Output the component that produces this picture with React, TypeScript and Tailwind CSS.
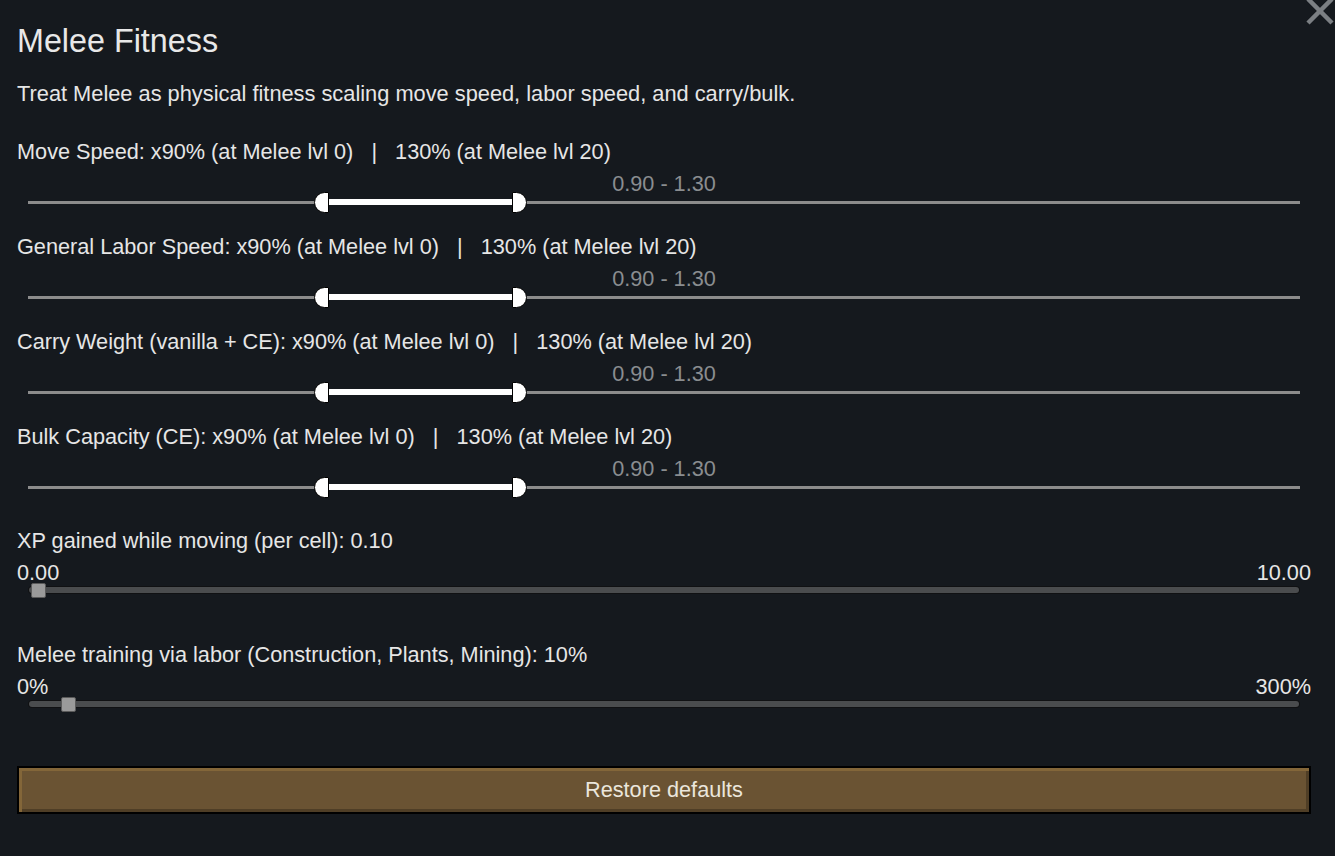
import React from "react";

const font = { fontFamily: '"Liberation Sans", Arial, sans-serif' };

function RangeRow({ label }: { label: string }) {
  return (
    <div className="flex h-[95px] flex-col">
      <div className="h-[22px] whitespace-pre text-[21.7px] leading-[22px] text-[#e6e6e6]">{label}</div>
      <div className="mt-[10px] h-[22px] text-center text-[21.7px] leading-[22px] text-[#8a8d90]">0.90 - 1.30</div>
      <div className="relative mx-[11px] h-[22px]">
        <div className="absolute left-0 right-0 top-[6px] h-[3px] bg-[#8c8c8c]" />
        <div className="absolute left-[300px] top-[4px] h-[6px] w-[186px] bg-white" />
        <div className="absolute left-[286px] top-[-3px] h-[21px] w-[15px] rounded-l-full border border-black bg-white" />
        <div className="absolute left-[484px] top-[-3px] h-[21px] w-[15px] rounded-r-full border border-black bg-white" />
      </div>
    </div>
  );
}

function SingleSlider({ label, min, max, pos }: { label: string; min: string; max: string; pos: number }) {
  return (
    <div className="flex flex-col">
      <div className="h-[22px] text-[21.7px] leading-[22px] text-[#e6e6e6]">{label}</div>
      <div className="mt-[10px] flex h-[22px] justify-between text-[21.7px] leading-[22px] text-[#e6e6e6]">
        <span>{min}</span>
        <span>{max}</span>
      </div>
      <div className="relative mx-[11px] h-[16px]">
        <div className="absolute left-0 right-0 top-[2px] h-[8px] rounded-full bg-[#101113] p-[1px]">
          <div className="h-full w-full rounded-full bg-[#4a4c4e]" />
        </div>
        <div
          className="absolute top-[-1px] h-[15px] w-[15px] rounded-[2px] border border-[#5a5a5a] bg-[#9a9a9a]"
          style={{ left: pos }}
        />
      </div>
    </div>
  );
}

export default function App() {
  return (
    <div className="relative h-[856px] w-[1335px] overflow-hidden bg-[#15191e]" style={font}>
      <svg className="absolute right-[0px] top-[-3px]" width="31" height="28" viewBox="0 0 31 28">
        <path d="M4 2 L28 26 M28 2 L4 26" stroke="#7b7f83" strokeWidth="4.5" />
      </svg>
      <div className="flex flex-col pl-[17px] pr-[24px] pt-[23px]">
        <div className="text-[32.3px] leading-[36px] text-[#e8e8e8]">Melee Fitness</div>
        <div className="mt-[24px] h-[22px] text-[21.8px] leading-[22px] text-[#e6e6e6]">
          Treat Melee as physical fitness scaling move speed, labor speed, and carry/bulk.
        </div>
        <div className="mt-[36px] flex flex-col">
          <RangeRow label="Move Speed: x90% (at Melee lvl 0)   |   130% (at Melee lvl 20)" />
          <RangeRow label="General Labor Speed: x90% (at Melee lvl 0)   |   130% (at Melee lvl 20)" />
          <RangeRow label="Carry Weight (vanilla + CE): x90% (at Melee lvl 0)   |   130% (at Melee lvl 20)" />
          <RangeRow label="Bulk Capacity (CE): x90% (at Melee lvl 0)   |   130% (at Melee lvl 20)" />
        </div>
        <div className="mt-[9px]">
          <SingleSlider label="XP gained while moving (per cell): 0.10" min="0.00" max="10.00" pos={3} />
        </div>
        <div className="mt-[44px]">
          <SingleSlider
            label="Melee training via labor (Construction, Plants, Mining): 10%"
            min="0%"
            max="300%"
            pos={33}
          />
        </div>
        <button className="mt-[52px] h-[48px] w-full border-2 border-black bg-[#6a5333] text-[21.7px] text-[#ebe6dc] shadow-[inset_3px_3px_0_#836639,inset_-3px_-3px_0_#4f3e26]">
          Restore defaults
        </button>
      </div>
    </div>
  );
}
